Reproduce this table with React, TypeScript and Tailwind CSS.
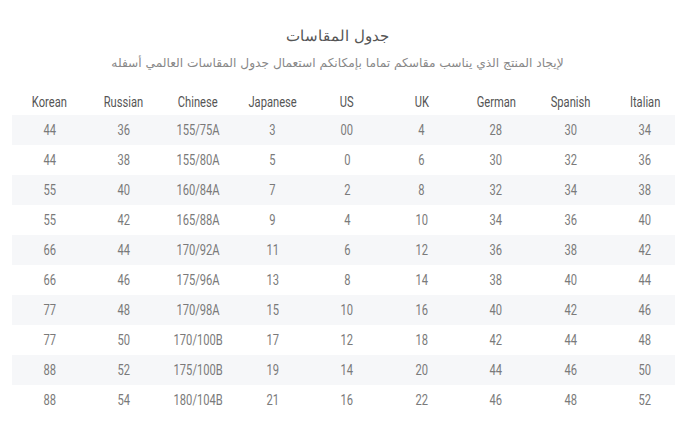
const headers = ["Korean", "Russian", "Chinese", "Japanese", "US", "UK", "German", "Spanish", "Italian"]

const rows = [
  ["44", "36", "155/75A", "3", "00", "4", "28", "30", "34"],
  ["44", "38", "155/80A", "5", "0", "6", "30", "32", "36"],
  ["55", "40", "160/84A", "7", "2", "8", "32", "34", "38"],
  ["55", "42", "165/88A", "9", "4", "10", "34", "36", "40"],
  ["66", "44", "170/92A", "11", "6", "12", "36", "38", "42"],
  ["66", "46", "175/96A", "13", "8", "14", "38", "40", "44"],
  ["77", "48", "170/98A", "15", "10", "16", "40", "42", "46"],
  ["77", "50", "170/100B", "17", "12", "18", "42", "44", "48"],
  ["88", "52", "175/100B", "19", "14", "20", "44", "46", "50"],
  ["88", "54", "180/104B", "21", "16", "22", "46", "48", "52"],
]

// the reference uses a condensed face; squeeze Roboto to match it
function Narrow({ children }: { children: React.ReactNode }) {
  return <span className="inline-block translate-y-[1px] scale-x-[0.72] whitespace-nowrap">{children}</span>
}

function App() {
  return (
    <div className="h-[430px] w-[675px] overflow-hidden bg-white">
      <div className="pt-[24px] text-center font-['DejaVu_Sans',sans-serif]" dir="rtl">
        <h2 className="text-[14.5px] font-light leading-[24px] text-[#555]">جدول المقاسات</h2>
        <p className="mt-[4px] text-[12.2px] leading-[22px] text-[#888]">
          لإيجاد المنتج الذي يناسب مقاسكم تماما بإمكانكم استعمال جدول المقاسات العالمي أسفله
        </p>
      </div>

      <table className="ml-[12px] mt-[15px] w-[670px] table-fixed border-collapse font-['Roboto',sans-serif] text-[15.5px]">
        <thead>
          <tr className="h-[26px]">
            {headers.map((h) => (
              <th key={h} className="text-center align-middle font-normal text-[#555]">
                <Narrow>{h}</Narrow>
              </th>
            ))}
          </tr>
        </thead>
        <tbody>
          {rows.map((row, i) => (
            <tr key={i} className={i % 2 === 0 ? "h-[30px] bg-[#f6f7f9]" : "h-[30px] bg-white"}>
              {row.map((cell, j) => (
                <td key={j} className="text-center align-middle text-[#7a7a7a]">
                  <Narrow>{cell}</Narrow>
                </td>
              ))}
            </tr>
          ))}
        </tbody>
      </table>
    </div>
  )
}

export default App
